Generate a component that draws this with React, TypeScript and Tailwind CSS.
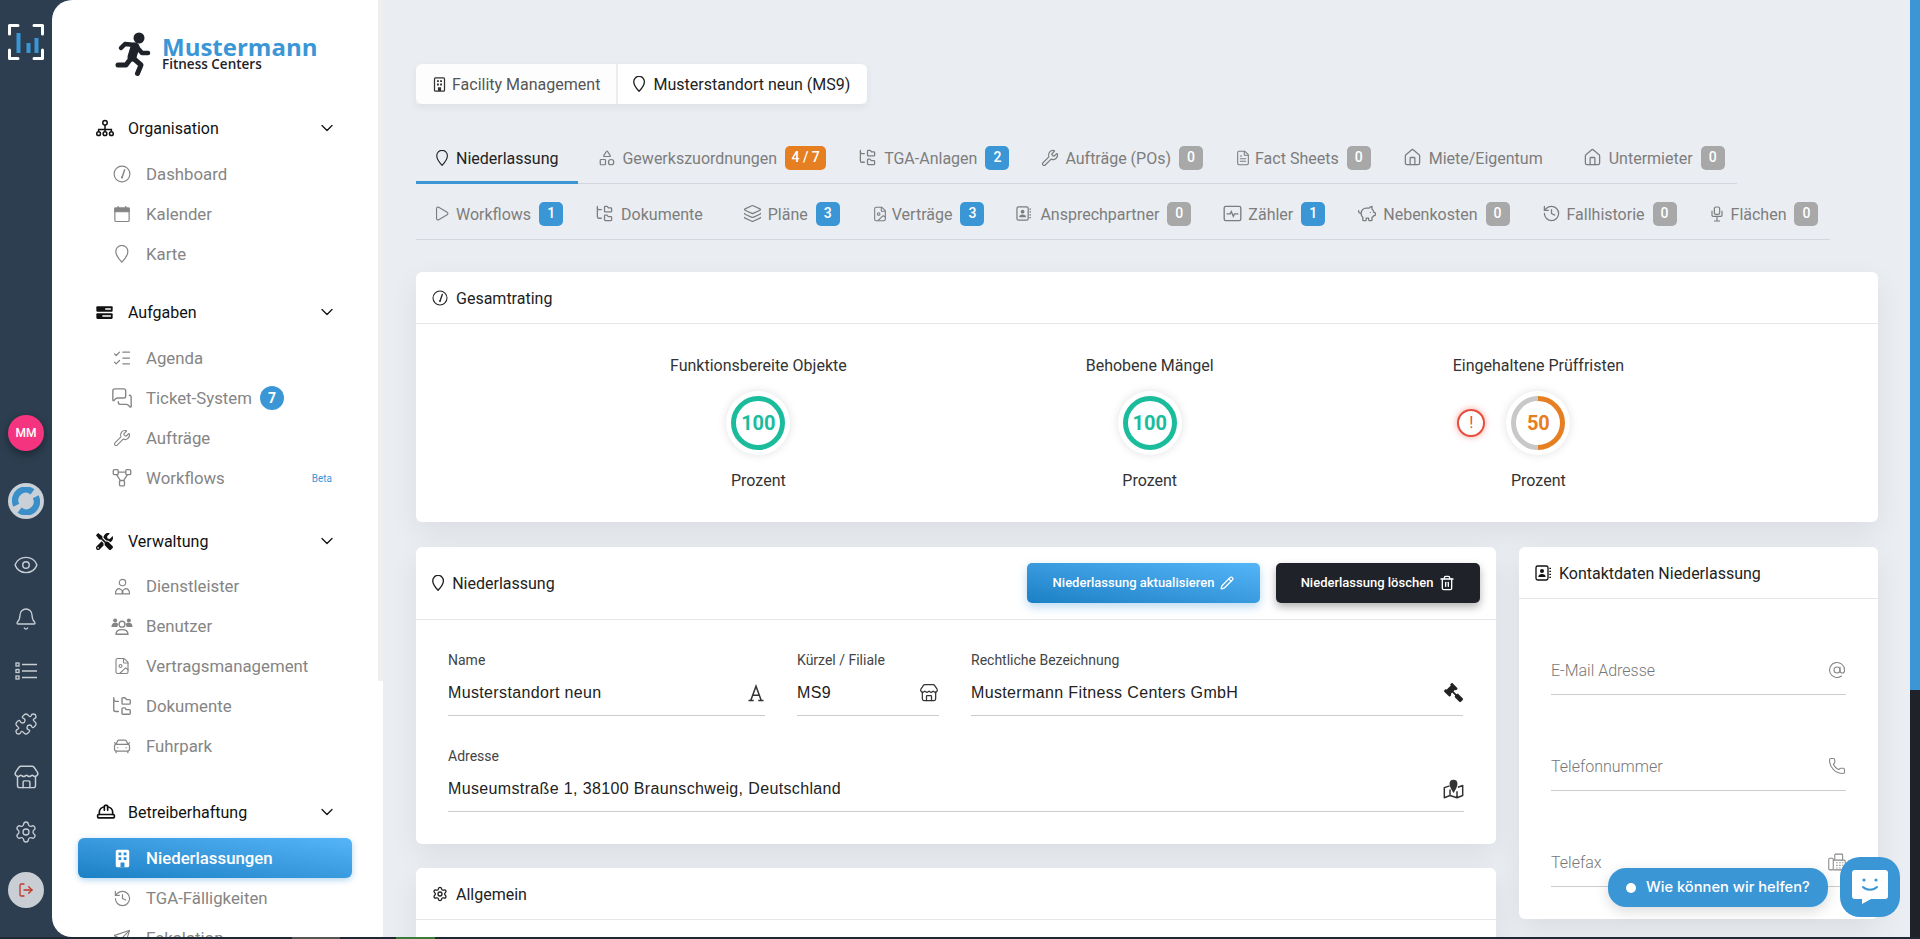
import React from "react";
import {
  AtSign, Bell, CarFront, ChevronDown, Eye, FileImage, FileText, FolderTree,
  HardHat, History, House, Layers, ListChecks, LogOut, MessagesSquare, Pencil, Phone, PiggyBank,
  Play, Puzzle, Send, Settings, Shapes, Store, Trash2, Wrench,
} from "lucide-react";
import { FaGavel, FaTools } from "react-icons/fa";

type IconProps = { size?: number; className?: string; strokeWidth?: number };
type Ic = React.ComponentType<IconProps>;

const Pin: Ic = ({ size = 16, className, strokeWidth = 1.9 }) => (
  <svg width={size * 0.76} height={size} viewBox="3.5 1 17 22.5" fill="none" stroke="currentColor" strokeWidth={strokeWidth} className={className}>
    <path d="M12 22.500S4.500 14.600 4.500 9a7.500 7.500 0 0 1 15 0c0 5.600-7.500 13.500-7.500 13.500z" strokeLinejoin="round" />
  </svg>
);
const Gauge: Ic = ({ size = 18, className }) => (
  <svg width={size} height={size} viewBox="0 0 24 24" fill="none" stroke="currentColor" strokeWidth="1.600" className={className}>
    <circle cx="12" cy="12" r="10.500" />
    <path d="M15.500 6.500 12.600 15" strokeWidth="2" strokeLinecap="round" />
    <circle cx="12" cy="16.500" r="1.500" fill="currentColor" stroke="none" />
  </svg>
);
const Cal: Ic = ({ size = 18, className }) => (
  <svg width={size} height={size} viewBox="0 0 24 24" fill="none" stroke="currentColor" strokeWidth="1.600" className={className}>
    <rect x="2.500" y="4" width="19" height="18" rx="1.500" />
    <path d="M2.500 4h19v5h-19z" fill="currentColor" />
    <path d="M7 1.500v3M17 1.500v3" strokeWidth="2" />
  </svg>
);
const Org: Ic = ({ size = 18, className }) => (
  <svg width={size} height={size} viewBox="0 0 24 24" fill="none" stroke="currentColor" strokeWidth="2" className={className}>
    <circle cx="12" cy="5" r="3" />
    <circle cx="3.500" cy="19.500" r="2.500" />
    <circle cx="12" cy="19.500" r="2.500" />
    <circle cx="20.500" cy="19.500" r="2.500" />
    <path d="M12 8v9M3.500 17v-3h17v3" />
  </svg>
);
const Tasks: Ic = ({ size = 18, className }) => (
  <svg width={size} height={size} viewBox="0 0 24 24" className={className}>
    <rect x="0.500" y="3" width="23" height="8" rx="1.500" fill="currentColor" />
    <rect x="0.500" y="13" width="23" height="8" rx="1.500" fill="currentColor" />
    <path d="M13 6h8v2h-8zM9 16h12v2H9z" fill="#fff" />
  </svg>
);
const Flow: Ic = ({ size = 20, className }) => (
  <svg width={size} height={size} viewBox="0 0 24 24" fill="none" stroke="currentColor" strokeWidth="1.600" className={className}>
    <rect x="1.500" y="2" width="6" height="6" rx="1.500" />
    <rect x="16.500" y="2" width="6" height="6" rx="1.500" />
    <rect x="9" y="15" width="6" height="6.500" rx="1.500" />
    <path d="M7.500 5h9M5.500 8l4.500 7M18.500 8 14 15" />
  </svg>
);
const Provider: Ic = ({ size = 18, className }) => (
  <svg width={size} height={size} viewBox="0 0 24 24" fill="none" stroke="currentColor" strokeWidth="1.600" className={className}>
    <circle cx="12" cy="6.500" r="4.500" />
    <path d="M2 22.500c0-5 2.500-7.500 6-7.500l4 3 4-3c3.500 0 6 2.500 6 7.500z" strokeLinejoin="round" />
    <path d="M12 18v4.500" strokeWidth="2.500" />
  </svg>
);
const Users3: Ic = ({ size = 22, className }) => (
  <svg width={size} height={size} viewBox="0 0 24 24" className={className} fill="none" stroke="currentColor" strokeWidth="1.500">
    <circle cx="12" cy="10" r="3.200" />
    <path d="M5.500 21c0-3.500 2-5 6.500-5s6.500 1.500 6.500 5z" />
    <circle cx="4.500" cy="6" r="2.200" fill="currentColor" stroke="none" />
    <circle cx="19.500" cy="6" r="2.200" fill="currentColor" stroke="none" />
    <path d="M.500 13c0-3 1.500-4.500 4-4.500s3 .7 3.500 1.500c-.5 1-1 1.700-1 3zM23.500 13c0-3-1.500-4.500-4-4.500s-3 .7-3.500 1.500c.5 1 1 1.700 1 3z" fill="currentColor" stroke="none" />
  </svg>
);
const Chair: Ic = ({ size = 16, className }) => (
  <svg width={size} height={size} viewBox="0 0 24 24" fill="none" stroke="currentColor" strokeWidth="1.800" className={className}>
    <rect x="8" y="1.500" width="8" height="11" rx="2.500" />
    <path d="M4.500 7v7a1.500 1.500 0 0 0 1.500 1.500h12a1.500 1.500 0 0 0 1.500-1.500V7M12 15.500V22M7.500 22.500h9" />
  </svg>
);
const Fax: Ic = ({ size = 18, className }) => (
  <svg width={size} height={size} viewBox="0 0 24 24" fill="none" stroke="currentColor" strokeWidth="1.400" className={className}>
    <rect x="1" y="7" width="6" height="15.500" rx="1.500" />
    <path d="M7 9.500h14.500a1.500 1.500 0 0 1 1.500 1.500v10a1.500 1.500 0 0 1-1.500 1.500H7M9 9.500V2.500a1 1 0 0 1 1-1h8.500a1 1 0 0 1 1 1v7" />
    <path d="M11 13h1.800M15 13h1.800M19 13h1.500M11 16.500h1.800M15 16.500h1.800M19 16.500h1.500M11 20h1.800M15 20h1.800M19 20h1.500" strokeWidth="1.500" />
  </svg>
);
const BuildingSolid: Ic = ({ size = 18, className }) => (
  <svg width={size} height={size} viewBox="0 0 24 24" className={className}>
    <rect x="3.500" y="1" width="17" height="22" rx="2" fill="#fff" />
    <path d="M7 4.500h3.500V8H7zM13.500 4.500H17V8h-3.500zM7 10.500h3.500V14H7zM13.500 10.500H17V14h-3.500zM9.500 17h5v6h-5z" fill="#2a8fd6" />
  </svg>
);
const BuildingLine: Ic = ({ size = 16, className }) => (
  <svg width={size} height={size} viewBox="0 0 24 24" fill="none" stroke="currentColor" strokeWidth="2" className={className}>
    <rect x="4" y="1.500" width="16" height="21" rx="1.500" />
    <path d="M8 5h3v3H8zM13 5h3v3h-3zM8 10.500h3v3H8zM13 10.500h3v3h-3zM9.500 16.500h5v6h-5z" fill="currentColor" stroke="none" />
  </svg>
);
const Contact: Ic = ({ size = 16, className }) => (
  <svg width={size} height={size} viewBox="0 0 24 24" fill="none" stroke="currentColor" strokeWidth="2" className={className}>
    <rect x="1.500" y="1.500" width="18" height="21" rx="2.500" />
    <circle cx="10.500" cy="9" r="3" fill="currentColor" stroke="none" />
    <path d="M5 18c0-3.200 2.200-4.500 5.500-4.500S16 14.800 16 18z" fill="currentColor" stroke="none" />
    <path d="M21.500 5h2.500M21.500 9.500h2.500M21.500 14h2.500M21.500 18.500h2.500" strokeWidth="2" />
  </svg>
);
const Zaehler: Ic = ({ size = 18, className }) => (
  <svg width={size} height={size} viewBox="0 0 24 24" fill="none" stroke="currentColor" strokeWidth="1.700" className={className}>
    <rect x="1.500" y="3" width="21" height="18" rx="2" />
    <path d="M4.500 12.500H9l1.500-3 2.500 6 1.500-3h5" />
  </svg>
);
const ThinA: Ic = ({ size = 18, className }) => (
  <svg width={size} height={size} viewBox="0 0 24 24" fill="none" stroke="currentColor" strokeWidth="2" className={className}>
    <path d="M2 22h7M15 22h7M5 22 12 3l7 19M8 15h8" />
  </svg>
);
const MapPin2: Ic = ({ size = 21, className }) => (
  <svg width={size} height={size} viewBox="0 0 24 24" fill="none" stroke="currentColor" strokeWidth="1.700" className={className}>
    <path d="M7.500 9 1.500 11v11.500l6.500-2.500 8 2.500 6.500-2.500V8.500L17 10.500M8 20v-7M16 22.500V15" strokeLinejoin="round" />
    <path d="M12 17S7.500 11 7.500 6.500a4.500 4.500 0 0 1 9 0C16.500 11 12 17 12 17z" fill="currentColor" stroke="none" />
  </svg>
);
const RailList: Ic = ({ size = 24, className }) => (
  <svg width={size} height={size} viewBox="0 0 24 24" fill="none" stroke="currentColor" strokeWidth="1.300" className={className}>
    <rect x="2" y="4" width="3" height="3" />
    <rect x="2" y="10.500" width="3" height="3" />
    <rect x="2" y="17" width="3" height="3" />
    <path d="M8 5.500h15M8 12h15M8 18.500h15" strokeWidth="1.500" />
  </svg>
);
const RailLogo = () => (
  <svg width="38" height="38" viewBox="0 0 38 38" fill="none" className="block">
    <path d="M11 2.500H2.500V11M27 2.500h8.500V11M11 35.500H2.500V27M27 35.500h8.500V27" stroke="#fff" strokeWidth="3" strokeLinecap="round" strokeLinejoin="round" />
    <path d="M11.500 10v20M21.500 20v10M29.500 15v15" stroke="#3b96d6" strokeWidth="4" />
  </svg>
);
const Runner = () => (
  <svg width="37" height="45" viewBox="0 0 37 45" fill="none" stroke="#1f2329" strokeLinecap="round" strokeLinejoin="round" className="block shrink-0">
    <circle cx="24" cy="6" r="5.500" fill="#1f2329" stroke="none" />
    <path d="M20 15 17 25" strokeWidth="9" />
    <path d="M6 16l4-4 10 1 7 8h6" strokeWidth="4.500" />
    <path d="M3 33h8l6-8M18 26l8 7-3.500 8.500" strokeWidth="5" />
  </svg>
);
const SyncIcon = () => (
  <svg width="28" height="28" viewBox="0 0 26 26" fill="none" stroke="#3b8fc9" strokeWidth="6">
    <path d="M4 17A10 10 0 0 1 19 4.500" />
    <path d="M22 9A10 10 0 0 1 7 21.500" />
  </svg>
);

const Badge = ({ value, tone = "blue" }: { value: string; tone?: "blue" | "gray" | "orange" }) => (
  <span
    className={`ml-2 -mr-2 flex h-6 min-w-6 items-center justify-center rounded-[5px] text-[14px] font-medium text-white ${
      tone === "blue" ? "bg-[#3b96d6]" : tone === "gray" ? "bg-[#a8a8a8]" : "w-[41px] bg-[#e67e22]"
    }`}
  >
    {value}
  </span>
);

type TabDef = { label: string; icon: Ic; size: number; box: string; badge?: string; tone?: "blue" | "gray" | "orange"; active?: boolean };

const Tab = ({ t }: { t: TabDef }) => {
  const I = t.icon;
  return (
    <div
      className={`flex h-[50px] items-center border-b-[3px] px-5 text-[16px] ${
        t.active ? "border-[#3b96d6] text-[#222]" : "border-transparent text-[#7d7d7d]"
      }`}
    >
      <span className={`flex shrink-0 items-center ${t.box}`}><I size={t.size} strokeWidth={1.600} /></span>
      <span className="pt-[2px]">{t.label}</span>
      {t.badge && <Badge value={t.badge} tone={t.tone} />}
    </div>
  );
};

const row1: TabDef[] = [
  { label: "Niederlassung", icon: Pin, size: 16, box: "w-[20px]", active: true },
  { label: "Gewerkszuordnungen", icon: Shapes, size: 18, box: "w-[24px]", badge: "4 / 7", tone: "orange" },
  { label: "TGA-Anlagen", icon: FolderTree, size: 19, box: "w-[26px]", badge: "2" },
  { label: "Aufträge (POs)", icon: Wrench, size: 18, box: "w-[24px]", badge: "0", tone: "gray" },
  { label: "Fact Sheets", icon: FileText, size: 16, box: "w-[20px]", badge: "0", tone: "gray" },
  { label: "Miete/Eigentum", icon: House, size: 19, box: "w-[26px]" },
  { label: "Untermieter", icon: House, size: 19, box: "w-[26px]", badge: "0", tone: "gray" },
];
const row2: TabDef[] = [
  { label: "Workflows", icon: Play, size: 17, box: "-ml-[3px] w-[23px]", badge: "1" },
  { label: "Dokumente", icon: FolderTree, size: 19, box: "w-[26px]" },
  { label: "Pläne", icon: Layers, size: 19, box: "w-[25px]", badge: "3" },
  { label: "Verträge", icon: FileImage, size: 16, box: "w-[20px]", badge: "3" },
  { label: "Ansprechpartner", icon: Contact, size: 15, box: "w-[24px]", badge: "0", tone: "gray" },
  { label: "Zähler", icon: Zaehler, size: 19, box: "w-[25px]", badge: "1" },
  { label: "Nebenkosten", icon: PiggyBank, size: 20, box: "w-[26px]", badge: "0", tone: "gray" },
  { label: "Fallhistorie", icon: History, size: 19, box: "w-[25px]", badge: "0", tone: "gray" },
  { label: "Flächen", icon: Chair, size: 16, box: "w-[22px]", badge: "0", tone: "gray" },
];

type NavItem = { label: string; icon: Ic; size: number; active?: boolean; count?: string; beta?: boolean };
type Section = { title: string; icon: Ic; iconSize: number; top: string; headGap: string; items: NavItem[] };

const Tools: Ic = ({ size, className }) => <FaTools size={size} className={className} />;

const sections: Section[] = [
  { title: "Organisation", icon: Org, iconSize: 18, top: "mt-0", headGap: "mt-[14px]", items: [
    { label: "Dashboard", icon: Gauge, size: 18 },
    { label: "Kalender", icon: Cal, size: 18 },
    { label: "Karte", icon: Pin, size: 18 },
  ] },
  { title: "Aufgaben", icon: Tasks, iconSize: 17, top: "mt-[26px]", headGap: "mt-[14px]", items: [
    { label: "Agenda", icon: ListChecks, size: 20 },
    { label: "Ticket-System", icon: MessagesSquare, size: 22, count: "7" },
    { label: "Aufträge", icon: Wrench, size: 18 },
    { label: "Workflows", icon: Flow, size: 20, beta: true },
  ] },
  { title: "Verwaltung", icon: Tools, iconSize: 17, top: "mt-[31px]", headGap: "mt-[13px]", items: [
    { label: "Dienstleister", icon: Provider, size: 17 },
    { label: "Benutzer", icon: Users3, size: 22 },
    { label: "Vertragsmanagement", icon: FileImage, size: 18 },
    { label: "Dokumente", icon: FolderTree, size: 22 },
    { label: "Fuhrpark", icon: CarFront, size: 20 },
  ] },
  { title: "Betreiberhaftung", icon: HardHat, iconSize: 20, top: "mt-[34px]", headGap: "mt-[14px]", items: [
    { label: "Niederlassungen", icon: BuildingSolid, size: 19, active: true },
    { label: "TGA-Fälligkeiten", icon: History, size: 19 },
    { label: "Eskalation", icon: Send, size: 18 },
  ] },
];

const Sidebar = () => (
  <aside className="flex h-full w-[331px] shrink-0 overflow-hidden rounded-l-[20px] bg-white">
    <div className="min-w-0 flex-1 pl-[26px] pt-[32px]">
      <div className="ml-[37px] flex h-[45px] items-start">
        <Runner />
        <div className="ml-[10px] font-['Open_Sans']">
          <div className="mt-[3px] text-[24px] font-bold leading-[24px] text-[#3b96d6]">Mustermann</div>
          <div className="text-[13.500px] font-semibold leading-[11px] text-[#1f2329]">Fitness Centers</div>
        </div>
      </div>
      <div className="mt-[39px] w-[274px]">
        {sections.map((s) => {
          const SI = s.icon;
          return (
            <section key={s.title} className={s.top}>
              <div className="flex h-6 items-center pl-[18px] pr-[15px] text-[16px] text-[#111]">
                <span className="flex w-8 shrink-0 items-center"><SI size={s.iconSize} /></span>
                <span className="flex-1 pt-[2px]">{s.title}</span>
                <ChevronDown size={20} strokeWidth={1.500} />
              </div>
              <div className={s.headGap}>
                {s.items.map((it) => {
                  const I = it.icon;
                  return (
                    <div
                      key={it.label}
                      className={`flex h-10 items-center rounded-[6px] pl-8 text-[16.800px] ${
                        it.active
                          ? "bg-linear-to-tr from-[#1a80c5] to-[#54b5f8] font-medium text-white shadow-[0_2px_6px_rgba(59,150,214,0.4)]"
                          : "text-[#858585]"
                      }`}
                    >
                      <span className="mr-[12px] flex w-6 shrink-0 justify-center"><I size={it.size} strokeWidth={1.500} /></span>
                      <span className="pt-[2px]">{it.label}</span>
                      {it.count && (
                        <span className="ml-2 flex h-6 w-6 items-center justify-center rounded-full bg-[#3b96d6] text-[14px] font-bold text-white">{it.count}</span>
                      )}
                      {it.beta && <span className="ml-auto mr-[20px] text-[10px] text-[#3b96d6]">Beta</span>}
                    </div>
                  );
                })}
              </div>
            </section>
          );
        })}
      </div>
    </div>
    <div className="w-[5px] shrink-0"><div className="h-[681px] bg-[#efefef]" /></div>
  </aside>
);

const Rail = () => (
  <nav className="flex h-full w-[52px] shrink-0 flex-col items-center bg-[#2c3e50] text-[#c8ced4]">
    <div className="mt-[23px]"><RailLogo /></div>
    <div className="mt-[354px] flex h-9 w-9 items-center justify-center rounded-full bg-[#f5347f] text-[12px] font-medium text-white shadow-[0_3px_8px_rgba(0,0,0,0.4)]">MM</div>
    <div className="mt-[32px] flex h-9 w-9 items-center justify-center rounded-full bg-[#c9d0d7]"><SyncIcon /></div>
    <div className="mt-[33px] flex flex-col items-center gap-[28.500px]">
      <Eye size={26} strokeWidth={1.300} />
      <Bell size={24} strokeWidth={1.300} />
      <RailList size={24} />
      <Puzzle size={24} strokeWidth={1.300} />
      <Store size={27} strokeWidth={1.300} />
      <Settings size={24} strokeWidth={1.300} />
    </div>
    <div className="mt-[28px] flex h-9 w-9 items-center justify-center rounded-full bg-[#c9ced5] text-[#c0392b]"><LogOut size={16} strokeWidth={2} /></div>
  </nav>
);

const Ring = ({ value, half }: { value: string; half?: boolean }) => {
  const color = half ? "#e67e22" : "#1abc9c";
  return (
    <div className="flex h-16 w-16 items-center justify-center rounded-full bg-white shadow-[0_0_10px_rgba(0,0,0,0.12)]">
      <div className="relative flex h-[54px] w-[54px] items-center justify-center">
        <svg width="54" height="54" viewBox="0 0 54 54" fill="none" className="absolute inset-0">
          {half ? (
            <>
              <path d="M27 2.500a24.500 24.500 0 0 0 0 49" stroke="#c8c8c8" strokeWidth="5" />
              <path d="M27 2.500a24.500 24.500 0 0 1 0 49" stroke={color} strokeWidth="5" />
            </>
          ) : (
            <circle cx="27" cy="27" r="24.500" stroke={color} strokeWidth="5" />
          )}
        </svg>
        <span className={`text-[20px] font-bold ${half ? "text-[#e67e22]" : "text-[#1abc9c]"}`}>{value}</span>
      </div>
    </div>
  );
};

const Metric = ({ title, value, half, alert }: { title: string; value: string; half?: boolean; alert?: boolean }) => (
  <div className="flex flex-col items-center text-[16px] text-[#333]">
    <div className="h-6 pt-[1px] leading-6">{title}</div>
    <div className="relative mt-[14px]">
      {alert && (
        <div className="absolute left-[-49px] top-[18px] flex h-7 w-7 items-center justify-center rounded-full border-2 border-[#e74c3c] bg-white text-[16px] leading-none text-[#e74c3c] shadow-[0_0_6px_rgba(231,76,60,0.5)]">!</div>
      )}
      <Ring value={value} half={half} />
    </div>
    <div className="mt-[14px] h-6 leading-6">Prozent</div>
  </div>
);

const CardHead = ({ icon, title, h = "h-[52px]", children }: { icon: React.ReactNode; title: string; h?: string; children?: React.ReactNode }) => (
  <div className={`flex ${h} items-center gap-2 border-b border-[#e4e6e9] px-4 text-[16px] text-[#222]`}>
    {icon}
    <span className="flex-1 pt-[2px]">{title}</span>
    {children}
  </div>
);

const Field = ({ label, value, icon, className = "" }: { label: string; value: string; icon: React.ReactNode; className?: string }) => (
  <div className={className}>
    <div className="h-4 text-[14px] leading-4 text-[#444]">{label}</div>
    <div className="flex h-[48px] items-center justify-between border-b border-[#cccccc] pt-[2px] text-[#222]">
      <span className="font-['Liberation_Sans'] text-[16px] tracking-[0.36px]">{value}</span>
      {icon}
    </div>
  </div>
);

const ContactField = ({ label, icon }: { label: string; icon: React.ReactNode }) => (
  <div className="mt-[47px] flex h-[49px] items-center justify-between border-b border-[#cccccc] text-[16px] font-light text-[#777]">
    <span className="pt-[2px]">{label}</span>
    <span className="text-[#888]">{icon}</span>
  </div>
);

const card = "rounded-[6px] bg-white shadow-[0_10px_30px_rgba(0,0,0,0.07)]";

export default function App() {
  return (
    <div className="relative flex h-[939px] w-full flex-col overflow-hidden bg-[#2c3e50] font-['Roboto',sans-serif]">
      <div className="flex h-[937px] min-h-0">
        <Rail />
        <Sidebar />
        <main className="min-w-0 flex-1 overflow-hidden bg-[#eaedf2] pl-[33px] pr-[32px] pt-[64px]">
          <div className="flex h-10 w-fit text-[16px] shadow-[0_3px_8px_rgba(0,0,0,0.06)]">
            <div className="flex items-center gap-[5px] rounded-l-[6px] bg-[#fdfdfd] px-[16px] text-[#555]">
              <BuildingLine size={15} className="text-[#333]" />
              <span className="pt-[2px]">Facility Management</span>
            </div>
            <div className="ml-[2px] flex items-center gap-[8px] rounded-r-[6px] bg-white pl-[15px] pr-[17px] text-[#222]">
              <Pin size={16} />
              <span className="pt-[2px]">Musterstandort neun (MS9)</span>
            </div>
          </div>

          <div className="mt-[30px] flex h-[50px] w-fit border-b border-[#d3d7dd]">
            {row1.map((t) => <Tab key={t.label} t={t} />)}
          </div>
          <div className="mt-[6px] flex h-[50px] w-fit border-b border-[#d3d7dd]">
            {row2.map((t) => <Tab key={t.label} t={t} />)}
          </div>

          <section className={`mt-[32px] ${card}`}>
            <CardHead icon={<Gauge size={16} className="text-[#222]" />} title="Gesamtrating" />
            <div className="flex justify-center gap-[239px] pb-[29px] pt-[29px]">
              <Metric title="Funktionsbereite Objekte" value="100" />
              <Metric title="Behobene Mängel" value="100" />
              <Metric title="Eingehaltene Prüffristen" value="50" half alert />
            </div>
          </section>

          <div className="mt-[25px] flex items-start gap-[23px]">
            <div className="w-[1080px] shrink-0">
              <section className={card}>
                <CardHead icon={<Pin size={16} className="text-[#222]" />} title="Niederlassung" h="h-[73px]">
                  <button className="flex h-10 w-[233px] items-center justify-center gap-[6px] rounded-[5px] bg-linear-to-tr from-[#1a80c5] to-[#54b5f8] text-[13px] font-medium text-white shadow-[0_4px_10px_rgba(59,150,214,0.35)]">
                    Niederlassung aktualisieren
                    <Pencil size={14} strokeWidth={2.200} />
                  </button>
                  <button className="ml-[8px] flex h-10 w-[204px] items-center justify-center gap-[6px] rounded-[5px] bg-[#1f2329] text-[13px] font-medium text-white shadow-[0_4px_8px_rgba(0,0,0,0.3)]">
                    Niederlassung löschen
                    <Trash2 size={16} strokeWidth={2} />
                  </button>
                </CardHead>
                <div className="px-[32px] pb-[32px] pt-[32px]">
                  <div className="flex gap-[32px]">
                    <Field className="w-[317px]" label="Name" value="Musterstandort neun" icon={<ThinA size={18} className="text-[#333]" />} />
                    <Field className="w-[142px]" label="Kürzel / Filiale" value="MS9" icon={<Store size={20} strokeWidth={1.500} className="text-[#333]" />} />
                    <Field className="w-[492px]" label="Rechtliche Bezeichnung" value="Mustermann Fitness Centers GmbH" icon={<FaGavel size={19} className="-scale-x-100 text-[#222]" />} />
                  </div>
                  <Field className="mt-[32px]" label="Adresse" value="Museumstraße 1, 38100 Braunschweig, Deutschland" icon={<MapPin2 size={21} className="text-[#333]" />} />
                </div>
              </section>
              <section className={`mt-[24px] h-[200px] ${card}`}>
                <CardHead icon={<Settings size={16} className="text-[#222]" />} title="Allgemein" />
              </section>
            </div>

            <section className={`min-w-0 flex-1 pb-[32px] ${card}`}>
              <CardHead icon={<Contact size={16} className="text-[#111]" />} title="Kontaktdaten Niederlassung" />
              <div className="px-[32px]">
                <ContactField label="E-Mail Adresse" icon={<AtSign size={18} strokeWidth={1.500} />} />
                <ContactField label="Telefonnummer" icon={<Phone size={18} strokeWidth={1.500} />} />
                <ContactField label="Telefax" icon={<Fax size={18} />} />
              </div>
            </section>
          </div>
        </main>
        <div className="flex w-[10px] shrink-0 flex-col bg-[#1f2329]">
          <div className="h-[690px] bg-[#3b96d6]" />
        </div>
      </div>

      <div className="flex h-[2px] bg-[#1f2933]">
        <div className="ml-[292px] h-full w-[48px] bg-[#555]" />
        <div className="ml-[56px] h-full w-[39px] bg-[#3a7a3a]" />
      </div>

      <div className="absolute left-[1608px] top-[868px] flex h-[39px] w-[220px] items-center rounded-[18px] bg-[#3b96d6] pl-[18px] font-['Inter'] text-[14.700px] font-medium text-white shadow-[0_4px_14px_rgba(0,0,0,0.15)]">
        <span className="mr-[10px] h-[10px] w-[10px] rounded-full bg-white" />
        Wie können wir helfen?
      </div>
      <div className="absolute left-[1840px] top-[857px] flex h-[60px] w-[60px] items-center justify-center rounded-[20px] bg-[#3b96d6]">
        <svg width="36" height="36" viewBox="0 0 36 36" fill="none">
          <path d="M3 1h30a3 3 0 0 1 3 3v23a3 3 0 0 1-3 3H19l-9 5v-5H3a3 3 0 0 1-3-3V4a3 3 0 0 1 3-3z" fill="#fff" />
          <circle cx="12" cy="11" r="1.600" fill="#3b96d6" />
          <circle cx="24" cy="11" r="1.600" fill="#3b96d6" />
          <path d="M11 18c3.500 3.500 10.500 3.500 14 0" stroke="#3b96d6" strokeWidth="2" strokeLinecap="round" />
        </svg>
      </div>
    </div>
  );
}
